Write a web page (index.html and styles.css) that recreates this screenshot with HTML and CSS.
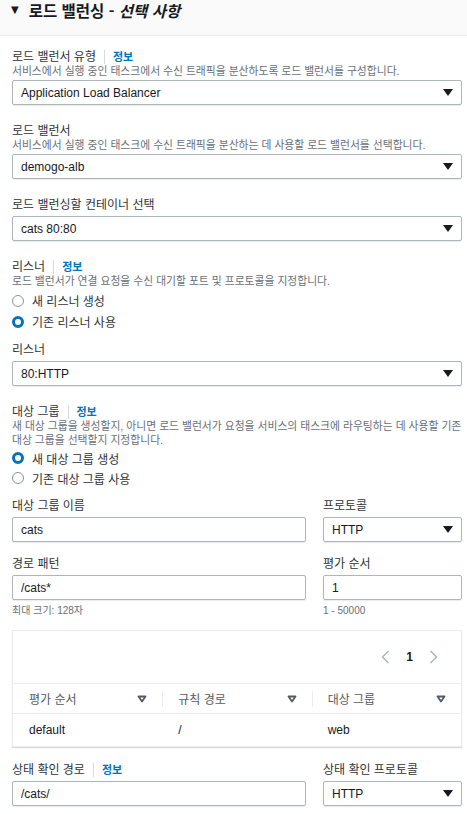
FILE: index.html
```html
<!DOCTYPE html>
<html lang="ko">
<head>
<meta charset="utf-8">
<link rel="stylesheet" href="styles.css">
</head>
<body>
<div class="header">
  <span class="caret">▼</span>
  <span class="title">로드 밸런싱 - <em>선택 사항</em></span>
</div>
<div class="content">
  <div class="field">
    <div class="label">로드 밸런서 유형<span class="sep"></span><a class="info">정보</a></div>
    <div class="desc">서비스에서 실행 중인 태스크에서 수신 트래픽을 분산하도록 로드 밸런서를 구성합니다.</div>
    <div class="select">Application Load Balancer<span class="arrow"></span></div>
  </div>
  <div class="field">
    <div class="label">로드 밸런서</div>
    <div class="desc">서비스에서 실행 중인 태스크에 수신 트래픽을 분산하는 데 사용할 로드 밸런서를 선택합니다.</div>
    <div class="select">demogo-alb<span class="arrow"></span></div>
  </div>
  <div class="field">
    <div class="label">로드 밸런싱할 컨테이너 선택</div>
    <div class="select">cats 80:80<span class="arrow"></span></div>
  </div>
  <div class="field radios">
    <div class="label">리스너<span class="sep"></span><a class="info">정보</a></div>
    <div class="desc">로드 밸런서가 연결 요청을 수신 대기할 포트 및 프로토콜을 지정합니다.</div>
    <div class="radio"><span class="dot"></span>새 리스너 생성</div>
    <div class="radio"><span class="dot on"></span>기존 리스너 사용</div>
  </div>
  <div class="field">
    <div class="label">리스너</div>
    <div class="select">80:HTTP<span class="arrow"></span></div>
  </div>
  <div class="field radios tight">
    <div class="label">대상 그룹<span class="sep"></span><a class="info">정보</a></div>
    <div class="desc">새 대상 그룹을 생성할지, 아니면 로드 밸런서가 요청을 서비스의 태스크에 라우팅하는 데 사용할 기존 대상 그룹을 선택할지 지정합니다.</div>
    <div class="radio"><span class="dot on"></span>새 대상 그룹 생성</div>
    <div class="radio"><span class="dot"></span>기존 대상 그룹 사용</div>
  </div>
  <div class="row">
    <div class="field grow">
      <div class="label">대상 그룹 이름</div>
      <div class="input">cats</div>
    </div>
    <div class="field side">
      <div class="label">프로토콜</div>
      <div class="select">HTTP<span class="arrow"></span></div>
    </div>
  </div>
  <div class="row">
    <div class="field grow">
      <div class="label">경로 패턴</div>
      <div class="input">/cats*</div>
      <div class="hint">최대 크기: 128자</div>
    </div>
    <div class="field side">
      <div class="label">평가 순서</div>
      <div class="input">1</div>
      <div class="hint">1 - 50000</div>
    </div>
  </div>
  <div class="table">
    <div class="pager">
      <svg class="chev" width="9" height="14" viewBox="0 0 9 14"><path d="M7.5 1 L1.5 7 L7.5 13" fill="none" stroke="#aab7b8" stroke-width="1.5"/></svg>
      <span class="page">1</span>
      <svg class="chev" width="9" height="14" viewBox="0 0 9 14"><path d="M1.5 1 L7.5 7 L1.5 13" fill="none" stroke="#aab7b8" stroke-width="1.5"/></svg>
    </div>
    <div class="thead">
      <div class="th">평가 순서<svg width="10" height="8" viewBox="0 0 10 8"><path d="M1.5 1.5 H8.5 L5 6.5 Z" fill="none" stroke="#545b64" stroke-width="1.8" stroke-linejoin="round"/></svg></div>
      <div class="th">규칙 경로<svg width="10" height="8" viewBox="0 0 10 8"><path d="M1.5 1.5 H8.5 L5 6.5 Z" fill="none" stroke="#545b64" stroke-width="1.8" stroke-linejoin="round"/></svg></div>
      <div class="th">대상 그룹<svg width="10" height="8" viewBox="0 0 10 8"><path d="M1.5 1.5 H8.5 L5 6.5 Z" fill="none" stroke="#545b64" stroke-width="1.8" stroke-linejoin="round"/></svg></div>
    </div>
    <div class="tr">
      <div class="td">default</div>
      <div class="td">/</div>
      <div class="td">web</div>
    </div>
  </div>
  <div class="row">
    <div class="field grow">
      <div class="label">상태 확인 경로<span class="sep"></span><a class="info">정보</a></div>
      <div class="input">/cats/</div>
    </div>
    <div class="field side">
      <div class="label">상태 확인 프로토콜</div>
      <div class="select">HTTP<span class="arrow"></span></div>
    </div>
  </div>
</div>
</body>
</html>
```

FILE: styles.css
```css
* { box-sizing: border-box; }
html, body { margin: 0; padding: 0; background: #fff; }
body {
  font-family: "Liberation Sans", "Noto Sans CJK KR", Arial, sans-serif;
  color: #16191f;
  font-size: 12px;
  width: 467px;
  overflow: hidden;
}
.header {
  height: 36px;
  background: #fafafa;
  border-bottom: 1px solid #eaeded;
  display: flex;
  align-items: flex-start;
  padding: 0 0 0 11px;
}
.caret { font-size: 10px; line-height: 20px; color: #16191f; margin-right: 10px; font-family: "DejaVu Sans", sans-serif; }
.title { font-size: 15.5px; line-height: 20px; font-weight: 700; color: #16191f; font-family: "Noto Sans CJK KR", sans-serif; }
.title em { font-style: italic; }
.content { padding: 11px 5px 0 12px; display: flex; flex-direction: column; }
.field { display: flex; flex-direction: column; margin-bottom: 16px; }
.label { font-size: 12px; line-height: 16px; padding-top: 2px; color: #2e3338; display: flex; align-items: center; margin-bottom: 3px; }
.sep { width: 1px; height: 14px; background: #d5dbdb; margin: 0 8px; }
.info { color: #0073bb; font-weight: 700; font-size: 11px; }
.desc { font-size: 10.8px; line-height: 14px; color: #687078; margin-top: -4px; margin-bottom: 2px; }
.select, .input {
  height: 25px;
  border: 1px solid #aab7b8;
  border-radius: 2px;
  display: flex;
  align-items: center;
  padding: 0 8px;
  font-size: 12px;
  color: #16191f;
  box-shadow: 0 1px 1px rgba(0,0,0,0.08);
}
.arrow {
  margin-left: auto;
  width: 0; height: 0;
  border-left: 5px solid transparent;
  border-right: 5px solid transparent;
  border-top: 7px solid #16191f;
}
.radios { margin-bottom: 8px; }
.radios .desc { margin-bottom: 2px; }
.radio { display: flex; align-items: center; font-size: 12px; height: 21px; color: #2e3338; }
.radios.tight { margin-bottom: 8px; }
.radios.tight .desc { margin-bottom: 1px; }
.radios.tight .radio { height: 20px; }
.dot { width: 12px; height: 12px; border-radius: 50%; border: 1px solid #879596; margin-right: 8px; }
.dot.on { border: 3.5px solid #0073bb; }
.row { display: flex; gap: 17px; }
.grow { flex: 1; }
.side { width: 139px; flex: none; }
.row .field { margin-bottom: 12px; }
.hint { font-size: 10px; color: #687078; line-height: 12px; margin-top: 5px; margin-bottom: -3px; }
.table {
  border: 1px solid #eaeded;
  box-shadow: 0 1px 1px rgba(0,0,0,0.15);
  margin-top: 4px;
  margin-bottom: 13px;
}
.pager { height: 53px; display: flex; align-items: center; justify-content: flex-end; padding-right: 23px; gap: 16px; border-bottom: 1px solid #eaeded; }
.page { font-weight: 700; font-size: 12px; color: #16191f; }
.thead { display: flex; height: 30px; border-bottom: 1px solid #eaeded; background: #fff; }
.th { flex: 1; display: flex; align-items: center; padding: 0 15px 0 16px; color: #545b64; font-size: 12px; position: relative; }
.th + .th::before { content: ""; position: absolute; left: 0; top: 7px; height: 16px; width: 1px; background: #eaeded; }
.th svg { margin-left: auto; }
.tr { display: flex; height: 32px; }
.td { flex: 1; display: flex; align-items: center; padding-left: 16px; font-size: 12px; color: #16191f; }
```
